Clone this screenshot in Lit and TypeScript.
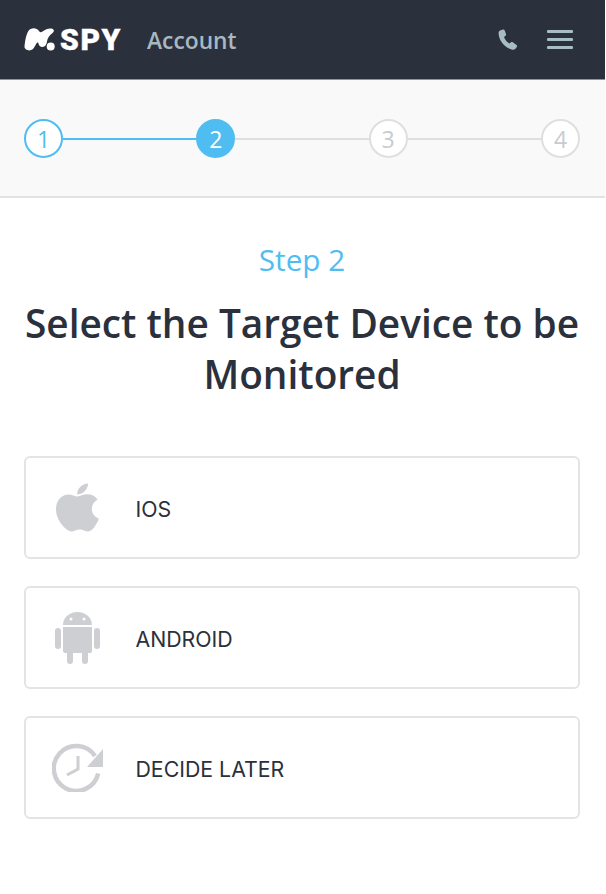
import { LitElement, css, html, svg } from 'lit';
import { customElement } from 'lit/decorators.js';
import { classMap } from 'lit/directives/class-map.js';

const apple = svg`<path d="M36.500 1c.3 5-4.500 11.500-11.300 11.300-.5-5.300 5-11 11.300-11.300zM25.400 14.500c2.800 0 6-2.300 10.400-2.300 4.400 0 8.200 2 10.700 5.500-4 2.500-6 5.500-6 9.700 0 4.800 2.700 8.300 7.300 10.300-1.700 5-6.500 13.300-11.300 13.300-3.300 0-4.800-2.100-8.700-2.100-4 0-5.800 2.100-8.700 2.100C13.400 50.500 3 39.500 3 27.800c0-9.800 6.500-15.400 13-15.400 3.800 0 6.700 2.100 9.400 2.100z"/>`;

const android = svg`<rect x="0" y="16" width="6" height="21" rx="3"/><rect x="39" y="16" width="6" height="21" rx="3"/>
  <path fill-rule="evenodd" d="M8 13C8 5.500 14.500 0 22.500 0S37 5.500 37 13H8zM16 5.500a1.500 1.500 0 100 3 1.500 1.500 0 000-3zM29 5.500a1.500 1.500 0 100 3 1.500 1.500 0 000-3z"/>
  <path d="M8 15h29v24a2 2 0 01-2 2h-2v8a3 3 0 01-6 0v-8h-9v8a3 3 0 01-6 0v-8h-2a2 2 0 01-2-2V15z"/>`;

const later = svg`<path d="M43 13A22.500 22.500 0 1 0 46.200 30.500" fill="none" stroke="currentColor" stroke-width="4.500"/>
  <path d="M51 6V24H35z"/>
  <path d="M26 13V26L15 32" fill="none" stroke="currentColor" stroke-width="3"/>`;

const options = [
  { label: 'IOS', icon: apple, box: '3 1 45 50', w: 43, h: 51 },
  { label: 'ANDROID', icon: android, box: '0 0 45 52', w: 45, h: 52 },
  { label: 'DECIDE LATER', icon: later, box: '0 0 51 49', w: 51, h: 49 },
];

@customElement('app-root')
export class AppRoot extends LitElement {
  static styles = css`
    :host {
      display: block;
      min-height: 894px;
      box-sizing: border-box;
      padding-right: 1px;
      background: #fff;
      font-family: 'Open Sans', sans-serif;
      color: #2b303d;
    }

    .topbar {
      display: flex;
      align-items: center;
      height: 79px;
      padding: 0 32px 0 24px;
      background: #2b303d;
      border-bottom: 1px solid #8f939a;
    }

    .logo {
      display: flex;
      align-items: center;
      flex: none;
      gap: 5px;
      width: 123px;
      color: #fff;
    }

    .logo svg {
      flex: none;
      fill: #fff;
    }

    .logo span {
      font: 900 30px/1 Roboto, sans-serif;
      letter-spacing: 1.6px;
      -webkit-text-stroke: 0.4px #fff;
    }

    .account {
      padding-top: 2px;
      font-size: 22.800px;
      font-weight: 600;
      color: #a8b8c0;
    }

    .actions {
      display: flex;
      align-items: center;
      gap: 29px;
      margin-left: auto;
      color: #a8bcc4;
    }

    .actions svg {
      display: block;
      fill: currentColor;
    }

    .burger {
      display: flex;
      flex-direction: column;
      gap: 5px;
      width: 26px;
    }

    .burger i {
      height: 3px;
      border-radius: 1px;
      background: #a8bcc4;
    }

    .stepper {
      display: flex;
      align-items: center;
      box-sizing: border-box;
      height: 118px;
      padding: 1px 25px 0 24px;
      background: #f9f9f9;
      border-bottom: 2px solid #e2e2e4;
    }

    .node {
      display: flex;
      align-items: center;
      justify-content: center;
      flex: none;
      width: 39px;
      height: 39px;
      box-sizing: border-box;
      border: 2px solid #dfdfe2;
      border-radius: 50%;
      background: #fff;
      font-size: 23px;
      color: #c8cbd0;
    }

    .node.done {
      border-color: #4fbdf2;
      color: #4fbdf2;
    }

    .node.current {
      border-color: #4fbdf2;
      background: #4fbdf2;
      color: #fff;
    }

    .line {
      flex: 1;
      height: 2px;
      background: #dfdfe2;
    }

    .line.done {
      background: #4fbdf2;
    }

    .content {
      padding: 43px 25px 0 24px;
    }

    .step {
      font-size: 29.700px;
      line-height: 38px;
      text-align: center;
      color: #4fbdf2;
    }

    h1 {
      margin: 19px 0 0;
      font-size: 38.800px;
      font-weight: 600;
      line-height: 51px;
      text-align: center;
      color: #2b303d;
    }

    .options {
      display: flex;
      flex-direction: column;
      gap: 27px;
      margin-top: 56px;
    }

    .option {
      display: flex;
      align-items: center;
      height: 103px;
      box-sizing: border-box;
      padding-left: 24px;
      border: 2px solid #e4e4e6;
      border-radius: 6px;
      background: #fff;
      font-family: Inter, sans-serif;
      font-size: 21.300px;
      color: #2b303d;
    }

    .icon {
      display: flex;
      justify-content: center;
      flex: none;
      width: 55px;
      margin-right: 30.500px;
      color: #cdcfd3;
    }

    .icon svg {
      fill: currentColor;
    }

    .label {
      padding-top: 2px;
    }
  `;

  private renderSteps() {
    const nodes = [1, 2, 3, 4];
    return nodes.map((n, i) => html`
      ${i > 0 ? html`<div class=${classMap({ line: true, done: n <= 2 })}></div>` : ''}
      <div class=${classMap({ node: true, done: n === 1, current: n === 2 })}>${n}</div>
    `);
  }

  render() {
    return html`
      <header class="topbar">
        <div class="logo">
          <svg width="31" height="25" viewBox="0 0 31 25"><path d="M.5 19.500C1 14 2.500 4 6.500 2 9.500.5 13 1 15 4c1 1.500 2 1.500 3.500.5C20.500 3 23 1.500 26.500 1.500c3.500 0 4.500 2.500 2 4.500-3 2-5 5-5.500 8.500-.5 3-2 5.500-4.500 5.500s-3.500-1.500-4-3.500c-.3-1-1-1.300-1.800-.5-1.500 2-2.500 7-7.200 7.500C2.500 23.300.3 21.500.5 19.500z"/><circle cx="26.700" cy="19.500" r="4"/></svg>
          <span>SPY</span>
        </div>
        <span class="account">Account</span>
        <div class="actions">
          <svg width="20" height="21" viewBox="0 0 20 21"><path d="M2 1.500 5 .5c.8-.2 1.400.2 1.700 1l1.300 3.500c.3.700 0 1.300-.5 1.800L6 8c.8 2.500 2.800 5 5.500 6.500l1.500-1.200c.6-.4 1.200-.4 1.800 0l3.700 2.700c.6.500.8 1.200.4 1.800l-1.400 2c-1 1-2.500 1.300-4 .8C6 18 1 11.500.6 4.500.5 3 1 2 2 1.500z"/></svg>
          <div class="burger"><i></i><i></i><i></i></div>
        </div>
      </header>
      <div class="stepper">${this.renderSteps()}</div>
      <main class="content">
        <div class="step">Step 2</div>
        <h1>Select the Target Device to be Monitored</h1>
        <div class="options">
          ${options.map(o => html`
            <div class="option">
              <span class="icon"><svg width=${o.w} height=${o.h} viewBox=${o.box}>${o.icon}</svg></span>
              <span class="label">${o.label}</span>
            </div>
          `)}
        </div>
      </main>
    `;
  }
}
